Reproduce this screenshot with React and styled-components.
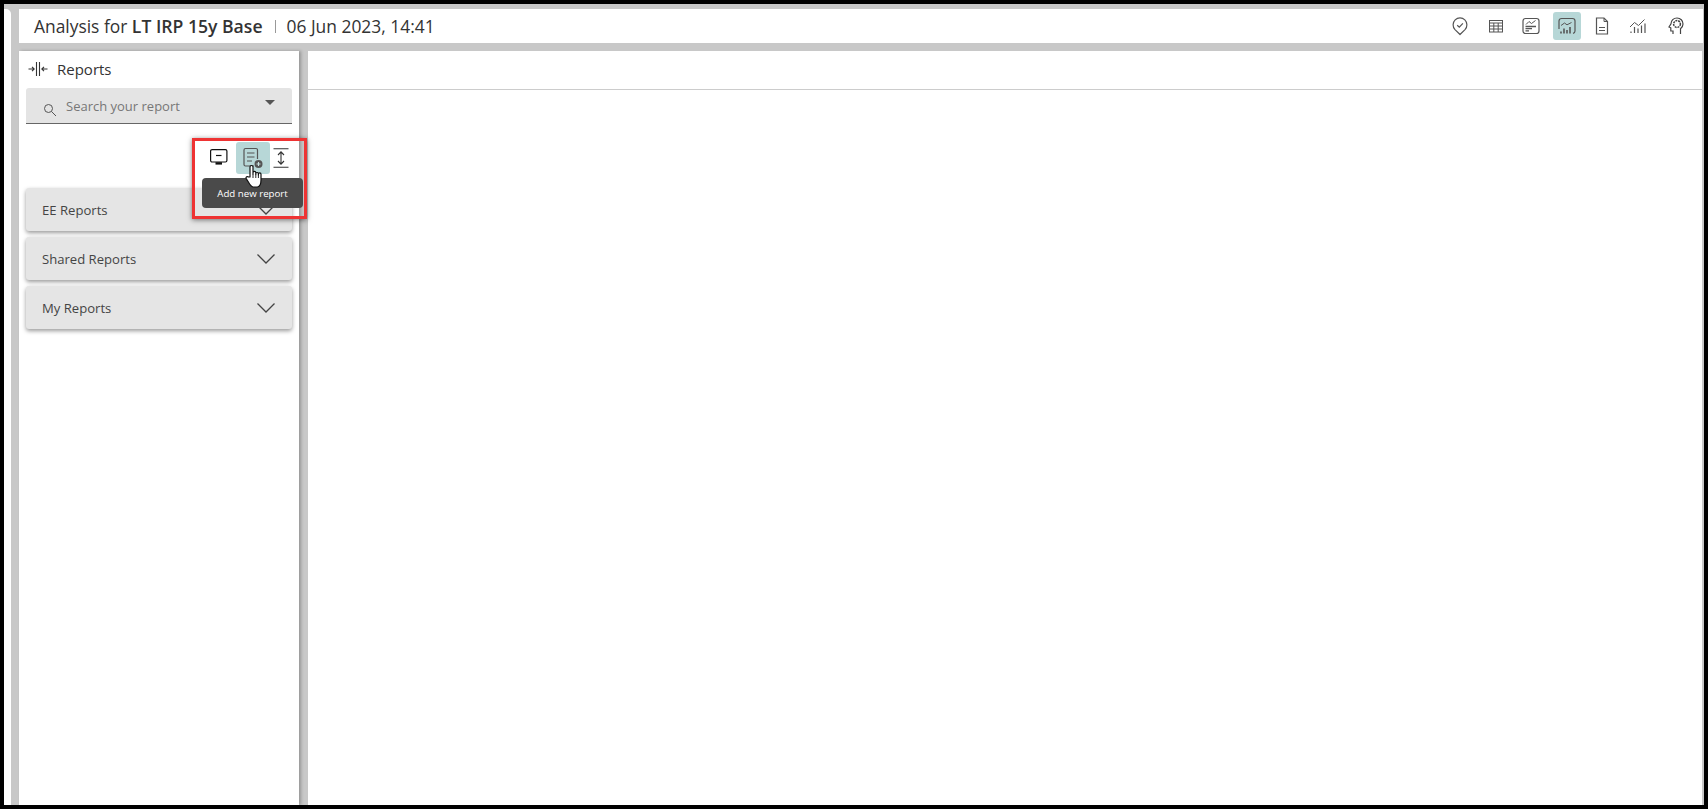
import React from "react";
import styled, { createGlobalStyle } from "styled-components";

const reportGroups = ["EE Reports", "Shared Reports", "My Reports"];

const PinIcon = () => (
  <svg width="20" height="22" viewBox="0 0 20 22" fill="none" stroke="#555" strokeWidth="1.2">
    <path d="M10 19.5 L5 14.6 A6.9 6.9 0 1 1 15 14.6 Z" strokeLinejoin="round" />
    <path d="M7.2 10.2 L9.3 12.2 L12.9 8.4" />
  </svg>
);

const GridIcon = () => (
  <svg width="16" height="16" viewBox="0 0 16 16" fill="none" stroke="#555" strokeWidth="1">
    <rect x="1.5" y="2.5" width="13" height="11.5" />
    <path d="M1.5 5 H14.5 M1.5 8 H14.5 M1.5 11 H14.5 M5.8 5 V14 M10.2 5 V14" />
  </svg>
);

const ChartBoxIcon = () => (
  <svg width="20" height="20" viewBox="0 0 20 20" fill="none" stroke="#555" strokeWidth="1.2">
    <rect x="2" y="2.5" width="16" height="15" rx="2.5" />
    <path d="M5 8.5 L8 5.5 L10.5 7.5 L14.5 4.5" strokeWidth="1" />
    <path d="M4.5 10.5 H15 M4.5 12.7 H11 M4.5 14.8 H8" strokeWidth="1.3" />
  </svg>
);

const ReportChartIcon = () => (
  <svg width="20" height="20" viewBox="0 0 20 20" fill="none" stroke="#555" strokeWidth="1.2">
    <path d="M2 13 V5 A2.5 2.5 0 0 1 4.5 2.5 H15.5 A2.5 2.5 0 0 1 18 5 V15 A2.5 2.5 0 0 1 16 17.4" />
    <path d="M4 9.5 L7.5 7 L10 8.8 L14.5 6.5" strokeWidth="1" />
    <path d="M4 17.5 V15.5 M7 17.5 V12.5 M10 17.5 V14 M13 17.5 V11" strokeWidth="1.6" />
  </svg>
);

const DocIcon = () => (
  <svg width="16" height="20" viewBox="0 0 16 20" fill="none" stroke="#555" strokeWidth="1.2">
    <path d="M2.5 2 H10 L13.5 5.5 V18 H2.5 Z" />
    <path d="M10 2 V5.5 H13.5" strokeWidth="1" />
    <path d="M5 11.5 H11 M5 14.5 H11" />
  </svg>
);

const TrendIcon = () => (
  <svg width="20" height="20" viewBox="0 0 20 20" fill="none" stroke="#555" strokeWidth="1">
    <path d="M2 11 L6.5 6.5 L10.5 9.5 L16.5 3.5" />
    <path d="M3 17 V15.5 M6.5 17 V11 M10 17 V12.5 M13.5 17 V9.5 M17 17 V7.5" strokeWidth="1.2" />
  </svg>
);

const HeadIcon = () => (
  <svg width="20" height="20" viewBox="0 0 20 20" fill="none" stroke="#444" strokeWidth="1.2">
    <path d="M7 18 V15 H4.8 V11.8 L3 11 L5 7.8 C5 4.4 7.6 2 11 2 C14.5 2 17 4.6 17 8 C17 10.2 16 11.6 14.5 12.8 V18" />
    <circle cx="11" cy="8" r="3.4" strokeDasharray="2 0.8" strokeWidth="1.5" />
  </svg>
);

const CollapseIcon = () => (
  <svg width="20" height="16" viewBox="0 0 20 16" fill="none" stroke="#333" strokeWidth="1.1">
    <path d="M0.5 8 H6 M4 5.8 L6.2 8 L4 10.2" />
    <path d="M8.5 1 V15 M11.5 1 V15" />
    <path d="M19.5 8 H14 M16 5.8 L13.8 8 L16 10.2" />
  </svg>
);

const SearchIcon = () => (
  <svg width="14" height="14" viewBox="0 0 14 14" fill="none" stroke="#555" strokeWidth="1">
    <circle cx="5.5" cy="5.5" r="4" />
    <path d="M8.5 8.5 L13 13" />
  </svg>
);

const MonitorIcon = () => (
  <svg width="20" height="20" viewBox="0 0 20 20" fill="none" stroke="#111" strokeWidth="1.2">
    <rect x="1.6" y="1.6" width="16.3" height="12.4" rx="1.5" />
    <path d="M7 7.5 H12.5" />
    <path d="M6.5 15.4 H13" strokeWidth="2.4" />
  </svg>
);

const AddReportIcon = () => (
  <svg width="22" height="24" viewBox="0 0 22 24" fill="none" stroke="#555" strokeWidth="1.2">
    <path d="M12 20 H3.5 A1.5 1.5 0 0 1 2 18.5 V4 A1.5 1.5 0 0 1 3.5 2.5 H14 A1.5 1.5 0 0 1 15.5 4 V13" />
    <path d="M5 7 H12.5 M5 11 H12.5 M5 15 H10" strokeWidth="1.2" />
    <circle cx="16.5" cy="18" r="4" fill="#555" stroke="none" />
    <path d="M14.5 18 H18.5 M16.5 16 V20" stroke="#c9e0e0" strokeWidth="1.1" />
  </svg>
);

const ExpandIcon = () => (
  <svg width="16" height="20" viewBox="0 0 16 20" fill="none" stroke="#333" strokeWidth="1.1">
    <path d="M0.5 0.8 H15.5 M0.5 19.2 H15.5" />
    <path d="M8 4 V16 M5 7 L8 3.8 L11 7 M5 13 L8 16.2 L11 13" />
  </svg>
);

const HandCursor = () => (
  <svg width="20" height="24" viewBox="0 0 18 24" fill="#fff" stroke="#111" strokeWidth="1.2" strokeLinejoin="round">
    <path d="M5 13 V3 A1.5 1.5 0 0 1 8 3 V10 V8.8 A1.4 1.4 0 0 1 10.8 8.8 V10.6 V9.4 A1.4 1.4 0 0 1 13.4 9.4 V11 V10.2 A1.3 1.3 0 0 1 16 10.2 V16 C16 19.5 14.5 22.5 12.5 23 H8 C6 22.5 4.5 20 3.4 18 L1.2 14.6 C0.5 13.2 2.4 11.8 3.6 13 Z" />
    <path d="M8 10 V14 M10.8 10.6 V14 M13.4 11 V14" fill="none" strokeWidth="0.9" />
  </svg>
);

const Chevron = () => (
  <svg width="20" height="12" viewBox="0 0 20 12" fill="none" stroke="#444" strokeWidth="1.3">
    <path d="M1.5 1.5 L10 10 L18.5 1.5" />
  </svg>
);

const headerIcons = [
  { Icon: PinIcon },
  { Icon: GridIcon },
  { Icon: ChartBoxIcon },
  { Icon: ReportChartIcon, active: true },
  { Icon: DocIcon },
  { Icon: TrendIcon },
  { Icon: HeadIcon, spaced: true },
];

const App = () => {
  return (
    <>
      <GlobalStyle />
      <Screen>
        <EdgeStrip />
        <Content>
          <Header>
            <Title>
              Analysis for <strong>LT IRP 15y Base</strong>
            </Title>
            <Divider />
            <DateLabel>06 Jun 2023, 14:41</DateLabel>
            <HeaderIcons>
              {headerIcons.map(({ Icon, active, spaced }, index) => (
                <HeaderButton key={index} $active={active} $spaced={spaced}>
                  <Icon />
                </HeaderButton>
              ))}
            </HeaderIcons>
          </Header>
          <Workspace>
            <Sidebar>
              <SidebarTitle>
                <CollapseIcon />
                <span>Reports</span>
              </SidebarTitle>
              <SearchBox>
                <SearchGlyph>
                  <SearchIcon />
                </SearchGlyph>
                <SearchText>Search your report</SearchText>
                <Caret />
              </SearchBox>
              <Toolbar>
                <ToolButton $width={34}>
                  <MonitorIcon />
                </ToolButton>
                <ToolButton $width={34} $active>
                  <AddReportIcon />
                  <HandSpot>
                    <HandCursor />
                  </HandSpot>
                </ToolButton>
                <ToolButton $width={22}>
                  <ExpandIcon />
                </ToolButton>
              </Toolbar>
              <Groups>
                {reportGroups.map((group) => (
                  <Group key={group}>
                    <span>{group}</span>
                    <Chevron />
                  </Group>
                ))}
              </Groups>
              <Tooltip>Add new report</Tooltip>
              <Highlight />
            </Sidebar>
            <Main>
              <MainTop />
            </Main>
          </Workspace>
        </Content>
      </Screen>
    </>
  );
};

export default App;

const GlobalStyle = createGlobalStyle`
  html, body {
    margin: 0;
    height: 100%;
    background: #000;
    overflow: hidden;
  }
  * {
    box-sizing: border-box;
  }
`;

const Screen = styled.div`
  display: flex;
  width: 1700px;
  height: 801px;
  margin: 4px 0 0 4px;
  background: #c8c8c8;
  font-family: "Open Sans", "Liberation Sans", sans-serif;
  color: #333;
`;

const EdgeStrip = styled.div`
  width: 7px;
  margin-top: 5px;
  background: #fff;
  border-top-right-radius: 5px;
`;

const Content = styled.div`
  flex: 1;
  min-width: 0;
  display: flex;
  flex-direction: column;
  gap: 8px;
  padding: 5px 1px 0 8px;
`;

const Header = styled.header`
  height: 34px;
  display: flex;
  align-items: center;
  padding: 0 13px 0 15px;
  background: #fff;
`;

const Title = styled.div`
  font-size: 17.4px;
  color: #333;

  strong {
    font-size: 17.6px;
    font-weight: 600;
  }
`;

const Divider = styled.div`
  width: 1px;
  height: 13px;
  margin: 0 11px 0 12px;
  background: #999;
`;

const DateLabel = styled.div`
  font-size: 17.4px;
  color: #333;
`;

const HeaderIcons = styled.div`
  margin-left: auto;
  display: flex;
  align-items: center;
  gap: 7.5px;
`;

const HeaderButton = styled.div`
  width: 28px;
  height: 28px;
  margin-left: ${(props) => (props.$spaced ? "3px" : "0")};
  display: flex;
  align-items: center;
  justify-content: center;
  border-radius: 3px;
  background: ${(props) => (props.$active ? "#b7d7d7" : "transparent")};
`;

const Workspace = styled.div`
  flex: 1;
  min-height: 0;
  display: flex;
  gap: 9px;
  padding-right: 1px;
`;

const Sidebar = styled.aside`
  position: relative;
  z-index: 1;
  width: 280px;
  padding: 0 7px;
  background: #fff;
  box-shadow: 2px 0 3px rgba(0, 0, 0, 0.25);
`;

const SidebarTitle = styled.div`
  height: 37px;
  display: flex;
  align-items: center;
  gap: 9px;
  padding: 0 0 1px 2px;
  font-size: 15px;
  color: #333;
`;

const SearchBox = styled.div`
  height: 36px;
  display: flex;
  align-items: center;
  padding: 0 17px;
  background: #e4e4e4;
  border-bottom: 1px solid #666;
  border-radius: 3px 3px 0 0;
`;

const SearchGlyph = styled.span`
  margin-top: 9px;
  line-height: 0;
`;

const SearchText = styled.span`
  margin-left: 9px;
  font-size: 13px;
  color: #777;
`;

const Caret = styled.span`
  margin: -7px 0 0 auto;
  border-left: 5.5px solid transparent;
  border-right: 5.5px solid transparent;
  border-top: 5px solid #555;
`;

const Toolbar = styled.div`
  height: 64px;
  padding-top: 18px;
  display: flex;
  justify-content: flex-end;
  align-items: flex-start;
`;

const ToolButton = styled.div`
  position: relative;
  width: ${(props) => props.$width}px;
  height: 32px;
  display: flex;
  align-items: center;
  justify-content: center;
  border-radius: 3px;
  background: ${(props) => (props.$active ? "#b7d7d7" : "transparent")};
`;

const HandSpot = styled.div`
  position: absolute;
  z-index: 4;
  left: 8px;
  top: 22px;
  line-height: 0;
`;

const Groups = styled.div`
  display: flex;
  flex-direction: column;
  gap: 6px;
`;

const Group = styled.div`
  height: 43px;
  display: flex;
  align-items: center;
  justify-content: space-between;
  padding: 0 16px;
  font-size: 13.1px;
  color: #444;
  background: #e5e5e5;
  border-radius: 3px;
  box-shadow: 0 2px 4px rgba(0, 0, 0, 0.4);
`;

const Tooltip = styled.div`
  position: absolute;
  z-index: 3;
  left: 183px;
  top: 127px;
  width: 101px;
  height: 30px;
  display: flex;
  align-items: center;
  justify-content: center;
  font-size: 9.7px;
  color: #fff;
  background: #4a4a4a;
  border-radius: 4px;
`;

const Highlight = styled.div`
  position: absolute;
  z-index: 2;
  left: 173px;
  top: 87px;
  width: 115px;
  height: 81px;
  border: 3px solid #ee3333;
  box-shadow: 0 1px 5px rgba(0, 0, 0, 0.5);
`;

const Main = styled.main`
  flex: 1;
  min-width: 0;
  background: #fff;
`;

const MainTop = styled.div`
  height: 39px;
  border-bottom: 1px solid #ccc;
`;
